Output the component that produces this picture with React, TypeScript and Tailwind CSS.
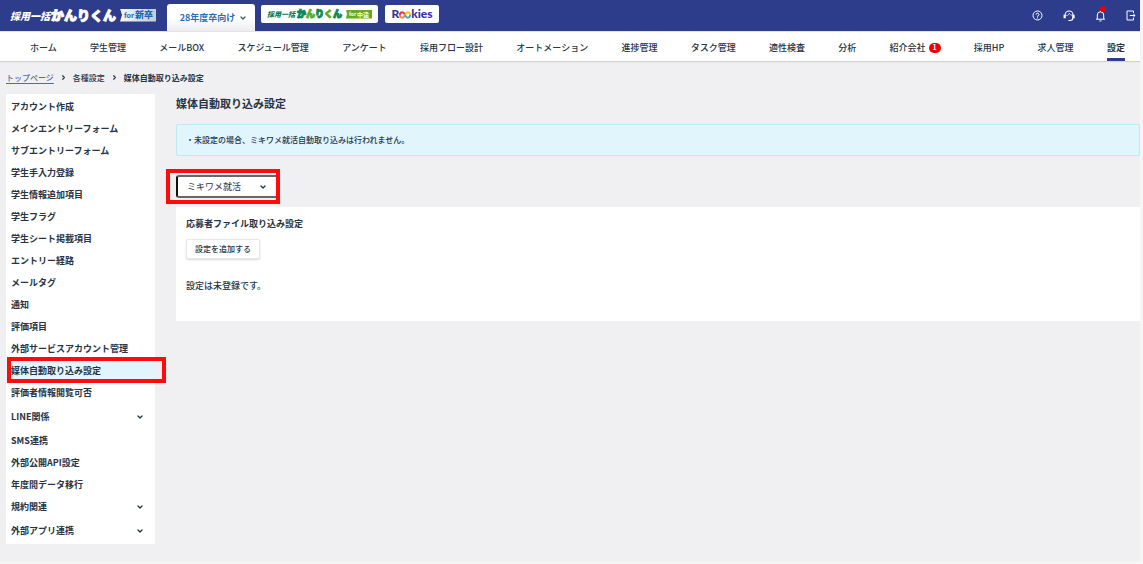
import { ChevronDown, ChevronRight } from "lucide-react";

type MenuItem = { label: string; expandable?: boolean; tall?: boolean; active?: boolean };

const NAV_ITEMS = [
  "ホーム",
  "学生管理",
  "メールBOX",
  "スケジュール管理",
  "アンケート",
  "採用フロー設計",
  "オートメーション",
  "進捗管理",
  "タスク管理",
  "適性検査",
  "分析",
  "紹介会社",
  "採用HP",
  "求人管理",
  "設定",
];

const MENU_ITEMS: MenuItem[] = [
  { label: "アカウント作成" },
  { label: "メインエントリーフォーム" },
  { label: "サブエントリーフォーム" },
  { label: "学生手入力登録" },
  { label: "学生情報追加項目" },
  { label: "学生フラグ" },
  { label: "学生シート掲載項目" },
  { label: "エントリー経路" },
  { label: "メールタグ" },
  { label: "通知" },
  { label: "評価項目" },
  { label: "外部サービスアカウント管理" },
  { label: "媒体自動取り込み設定", active: true },
  { label: "評価者情報閲覧可否" },
  { label: "LINE関係", expandable: true, tall: true },
  { label: "SMS連携" },
  { label: "外部公開API設定" },
  { label: "年度間データ移行" },
  { label: "規約関連", expandable: true },
  { label: "外部アプリ連携", expandable: true, tall: true },
];

function Header() {
  return (
    <header className="flex h-[31px] items-start bg-[#2e3c8c]">
      <a href="#" className="ml-[10px] flex h-[30px] w-[157px] shrink-0 items-center whitespace-nowrap text-white">
        <span className="text-[10px] font-black italic">採用一括</span>
        <span className="ml-px text-[13px] font-black [-webkit-text-stroke:1px_currentColor]">かんりくん</span>
        <span className="ml-1 flex h-[13px] items-center gap-px bg-linear-to-r from-[#f5f7fa] to-[#c3cad3] pr-[3px] pl-1 text-[#2068b4] [clip-path:polygon(0_0,100%_0,100%_100%,0_100%,2px_50%)]">
          <span className="text-[7px] font-bold">for</span>
          <span className="text-[9px] font-black">新卒</span>
        </span>
      </a>
      <button
        type="button"
        className="mt-1 flex h-[27px] w-[88px] items-center justify-center gap-1 rounded-t-[3px] bg-linear-to-b from-white from-50% to-[#ededf0] pl-[5px] text-[9px] font-bold whitespace-nowrap text-[#2a6bb5]"
      >
        28年度卒向け
        <ChevronDown size={8} strokeWidth={4} className="text-[#4c5866]" />
      </button>
      <a
        href="#"
        className="mt-[5px] ml-[6px] flex h-[18px] w-[117px] items-center justify-center rounded-[2px] bg-white whitespace-nowrap"
      >
        <span className="text-[7px] font-black text-[#087a4b] italic">採用一括</span>
        <span className="ml-[2px] text-[9px] font-black text-[#0a8a50] [-webkit-text-stroke:1px_currentColor]">
          <span>か</span>
          <span className="text-[#5cab20]">ん</span>
          <span>り</span>
          <span className="text-[#5cab20]">く</span>
          <span>ん</span>
        </span>
        <span className="ml-1 flex h-[9px] items-center gap-px bg-[#63ac20] px-[3px] text-white [clip-path:polygon(0_0,100%_0,100%_100%,0_100%,1px_50%)]">
          <span className="text-[5px] font-bold">for</span>
          <span className="text-[6px] font-bold">中途</span>
        </span>
      </a>
      <a
        href="#"
        aria-label="Rookies"
        className="mt-[5px] ml-[7px] flex h-[18px] w-[54px] items-center justify-center rounded-[2px] bg-white font-['Lato'] text-[12px] font-black text-[#3a2fa0]"
      >
        <span>R</span>
        <svg width="12" height="8" viewBox="0 0 11 7" fill="none" strokeWidth="1.7" className="mt-[2px]">
          <path d="M5.5 3.5C4.8 2 4.2 1 3.1 1A2.4 2.5 0 0 0 .8 3.5" stroke="#e8304a" />
          <path d="M.8 3.5A2.4 2.5 0 0 0 3.1 6C4.2 6 4.8 5 5.5 3.5" stroke="#f58a1f" />
          <path d="M5.5 3.5C6.2 2 6.8 1 7.9 1A2.4 2.5 0 0 1 10.2 3.5" stroke="#f2c51e" />
          <path d="M10.2 3.5A2.4 2.5 0 0 1 7.9 6C6.8 6 6.2 5 5.5 3.5" stroke="#35a8e0" />
        </svg>
        <span>kies</span>
      </a>
      <div className="ml-auto flex h-[31px] items-center gap-5 pr-1 text-white">
        <button type="button" aria-label="ヘルプ">
          <svg width="11" height="11" viewBox="0 0 11 11" fill="none" stroke="currentColor">
            <circle cx="5.5" cy="5.5" r="4.5" />
            <path d="M4.1 4.6A1.4 1.4 0 1 1 5.5 6v.6M5.5 7.4v1" />
          </svg>
        </button>
        <button type="button" aria-label="サポート">
          <svg width="12" height="12" viewBox="0 0 12 12" fill="none" stroke="currentColor" strokeWidth="1.1">
            <path d="M2.2 5.4V4.9a3.9 3.9 0 0 1 7.8 0v2.6c0 1.8-1.2 3-2.8 3H5.4" />
            <path d="M2.2 5.4H1.1v2.4h1.1zM10 5.4h1.1v2.4H10z" />
            <path d="M3.4 5.6C5 5.4 6 4.4 6.3 3.3 7 4.6 8 5.2 9.6 5.3" strokeWidth=".8" />
          </svg>
        </button>
        <button type="button" aria-label="お知らせ" className="relative">
          <svg width="11" height="12" viewBox="0 0 11 12" fill="none" stroke="currentColor">
            <path d="M1 9.2h9M2.3 9V5a3.2 3.2 0 0 1 6.4 0v4M4.4 10.9h2.2M5.5 1.8V.8" />
          </svg>
          <span className="absolute -top-1 right-0 size-[6px] rounded-full bg-[#f00000]" />
        </button>
        <button type="button" aria-label="ログアウト">
          <svg width="10" height="11" viewBox="0 0 10 11" fill="none" stroke="currentColor">
            <path d="M7.5 3V1H1v9h6.5V8M3.8 5.5H9M7.3 3.8 9 5.5 7.3 7.2" />
          </svg>
        </button>
      </div>
    </header>
  );
}

function GlobalNav() {
  return (
    <nav className="flex h-[30px] items-center justify-between border-t border-[#dfe1ef] bg-white pr-[15px] pl-[30px] text-[9px] font-medium whitespace-nowrap shadow-[0_1px_1px_rgba(0,0,0,0.12)]">
      {NAV_ITEMS.map((item) => (
        <a
          key={item}
          href="#"
          className={
            item === "設定"
              ? "flex h-full items-center border-b-[3px] border-[#2e3c8c] pt-[5px] font-bold"
              : "flex h-full items-center pt-[2px]"
          }
        >
          {item}
          {item === "紹介会社" && (
            <span className="ml-[3px] flex h-[10px] w-3 items-center justify-center rounded-full bg-[#f00000] text-[7px] font-bold text-white">
              1
            </span>
          )}
        </a>
      ))}
    </nav>
  );
}

function Breadcrumb() {
  return (
    <nav aria-label="パンくず" className="flex h-[33px] items-center gap-[6px] pl-[6px] text-[8px] font-medium">
      <a href="#" className="text-[#5966ab] underline underline-offset-2">
        トップページ
      </a>
      <ChevronRight size={7} strokeWidth={4} />
      <span>各種設定</span>
      <ChevronRight size={7} strokeWidth={4} />
      <span className="font-bold">媒体自動取り込み設定</span>
    </nav>
  );
}

function SideMenu() {
  return (
    <aside className="w-[149px] shrink-0 bg-white pt-[2px] text-[9px] font-bold">
      <ul>
        {MENU_ITEMS.map(({ label, expandable, tall, active }) => (
          <li key={label} className={tall ? "relative h-[26px]" : "relative h-[22px]"}>
            <a
              href="#"
              className={
                active
                  ? "flex h-full items-center bg-[#e0f5fc] pl-[5px]"
                  : "flex h-full items-center justify-between pr-[11px] pl-[5px]"
              }
            >
              {label}
              {expandable && <ChevronDown size={8} strokeWidth={4} />}
            </a>
            {active && (
              <span className="pointer-events-none absolute -top-[3px] -right-[11px] -bottom-px left-px border-4 border-[#ff0b0b]" />
            )}
          </li>
        ))}
      </ul>
    </aside>
  );
}

function ImportSettings() {
  return (
    <main className="min-w-0 flex-1">
      <h1 className="text-[11px] leading-[18px] font-bold">媒体自動取り込み設定</h1>
      <p className="mt-3 flex h-8 items-center rounded-[2px] border border-[#bfe9f7] bg-[#e0f5fc] pl-[9px] text-[8px] font-medium">
        ・未設定の場合、ミキワメ就活自動取り込みは行われません。
      </p>
      <div className="relative mt-[19px] h-[23px] w-[103px]">
        <select
          aria-label="媒体"
          className="block size-full appearance-none rounded-[3px] border-2 border-[#666] border-l-[#111] bg-white pl-[9px] text-[9px] outline-none"
        >
          <option>ミキワメ就活</option>
        </select>
        <ChevronDown size={8} strokeWidth={4} className="pointer-events-none absolute top-2 right-3" />
        <span className="pointer-events-none absolute -inset-y-[6px] -right-px -left-[10px] border-4 border-[#ff0b0b]" />
      </div>
      <section className="mt-[9px] bg-white px-[10px] pt-[10px] pb-[28px]">
        <h2 className="text-[9px] leading-[14px] font-bold">応募者ファイル取り込み設定</h2>
        <button
          type="button"
          className="mt-2 h-5 rounded-[2px] border border-[#e8e8eb] bg-white px-[8px] text-[8px] font-medium shadow-[0_1px_2px_rgba(0,0,0,0.15)]"
        >
          設定を追加する
        </button>
        <p className="mt-5 text-[9px] leading-[14px] font-medium">設定は未登録です。</p>
      </section>
    </main>
  );
}

export default function App() {
  return (
    <div className="flex min-h-screen bg-[#f6f6f7] pr-[3px] pb-[3px] font-['Noto_Sans_CJK_JP',sans-serif] text-[#273444]">
      <div className="min-w-0 flex-1 bg-[#f0f0f3]">
        <Header />
        <GlobalNav />
        <Breadcrumb />
        <div className="flex items-start gap-[21px] pl-[6px]">
          <SideMenu />
          <ImportSettings />
        </div>
      </div>
    </div>
  );
}
